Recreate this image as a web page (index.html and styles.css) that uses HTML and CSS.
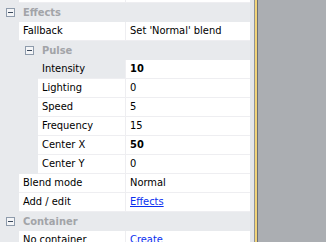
FILE: index.html
```html
<!DOCTYPE html>
<html>
<head>
<meta charset="utf-8">
<link rel="stylesheet" href="styles.css">
</head>
<body>
<div class="app">
  <div class="grid">
    <div class="row top"><div class="ind i1"></div><div class="label l1"></div><div class="value"></div></div>
    <div class="row head"><span class="box"></span><span class="htext">Effects</span></div>
    <div class="row"><div class="ind i1"></div><div class="label l1">Fallback</div><div class="value">Set 'Normal' blend</div></div>
    <div class="row head sub"><span class="box"></span><span class="htext">Pulse</span></div>
    <div class="row"><div class="ind i2"></div><div class="label l2 sel">Intensity</div><div class="value b">10</div></div>
    <div class="row"><div class="ind i2"></div><div class="label l2">Lighting</div><div class="value">0</div></div>
    <div class="row"><div class="ind i2"></div><div class="label l2">Speed</div><div class="value">5</div></div>
    <div class="row"><div class="ind i2"></div><div class="label l2">Frequency</div><div class="value">15</div></div>
    <div class="row"><div class="ind i2"></div><div class="label l2">Center X</div><div class="value b">50</div></div>
    <div class="row"><div class="ind i2"></div><div class="label l2">Center Y</div><div class="value">0</div></div>
    <div class="row"><div class="ind i1"></div><div class="label l1">Blend mode</div><div class="value">Normal</div></div>
    <div class="row"><div class="ind i1"></div><div class="label l1">Add / edit</div><div class="value"><a class="link">Effects</a></div></div>
    <div class="row head"><span class="box"></span><span class="htext">Container</span></div>
    <div class="row"><div class="ind i1"></div><div class="label l1">No container</div><div class="value"><a class="link">Create</a></div></div>
  </div>
  <div class="scroll"></div>
  <div class="split"></div>
  <div class="desk"></div>
</div>
</body>
</html>
```
FILE: styles.css
```css
html, body {
  margin: 0;
  padding: 0;
  overflow: hidden;
}
body {
  font-family: "DejaVu Sans Condensed", "DejaVu Sans", sans-serif;
  font-size: 11px;
  color: #000;
  background: #abaeb2;
}
.app {
  display: flex;
  width: 326px;
  height: 242px;
}
.grid {
  width: 250px;
  flex: 0 0 250px;
  background: #e8eaed;
  display: flex;
  flex-direction: column;
  overflow: hidden;
}
.row {
  display: flex;
  flex: 0 0 19px;
  height: 19px;
  box-sizing: border-box;
  line-height: 18px;
  white-space: nowrap;
}
.row.top {
  flex: 0 0 3px;
  height: 3px;
}
.ind {
  flex: 0 0 auto;
  background: #e8eaed;
}
.i1 { width: 19px; }
.i2 { width: 38px; }
.label {
  box-sizing: border-box;
  background: #fff;
  border-right: 1px solid #eeeef1;
  border-bottom: 1px solid #eeeef1;
  padding-left: 4px;
}
.l1 { width: 107px; }
.l2 { width: 88px; }
.label.sel {
  background: #e8eaed;
}
.value {
  flex: 1;
  background: #fff;
  border-bottom: 1px solid #eeeef1;
  padding-left: 4px;
}
.value.b { font-weight: bold; }
.link {
  color: #0a2ff0;
  text-decoration: underline;
}
.head {
  align-items: center;
  background: #e8eaed;
  padding-left: 6px;
}
.head.sub {
  padding-left: 25px;
}
.box {
  box-sizing: border-box;
  width: 9px;
  height: 9px;
  border: 1px solid #8e9bab;
  background: #f4f5f7;
  position: relative;
  margin-right: 8px;
}
.box::after {
  content: "";
  position: absolute;
  left: 1px;
  top: 3px;
  width: 5px;
  height: 1px;
  background: #3b4a5e;
}
.htext {
  font-weight: bold;
  color: #a2a4a8;
}
.scroll {
  flex: 0 0 4px;
  background: #e4e6ea;
}
.split {
  flex: 0 0 2px;
  border-left: 1px solid #8f9297;
  border-right: 1px solid #6c6e72;
  background: #f2d479;
}
.desk {
  flex: 1;
  background: #abaeb2;
}
```
